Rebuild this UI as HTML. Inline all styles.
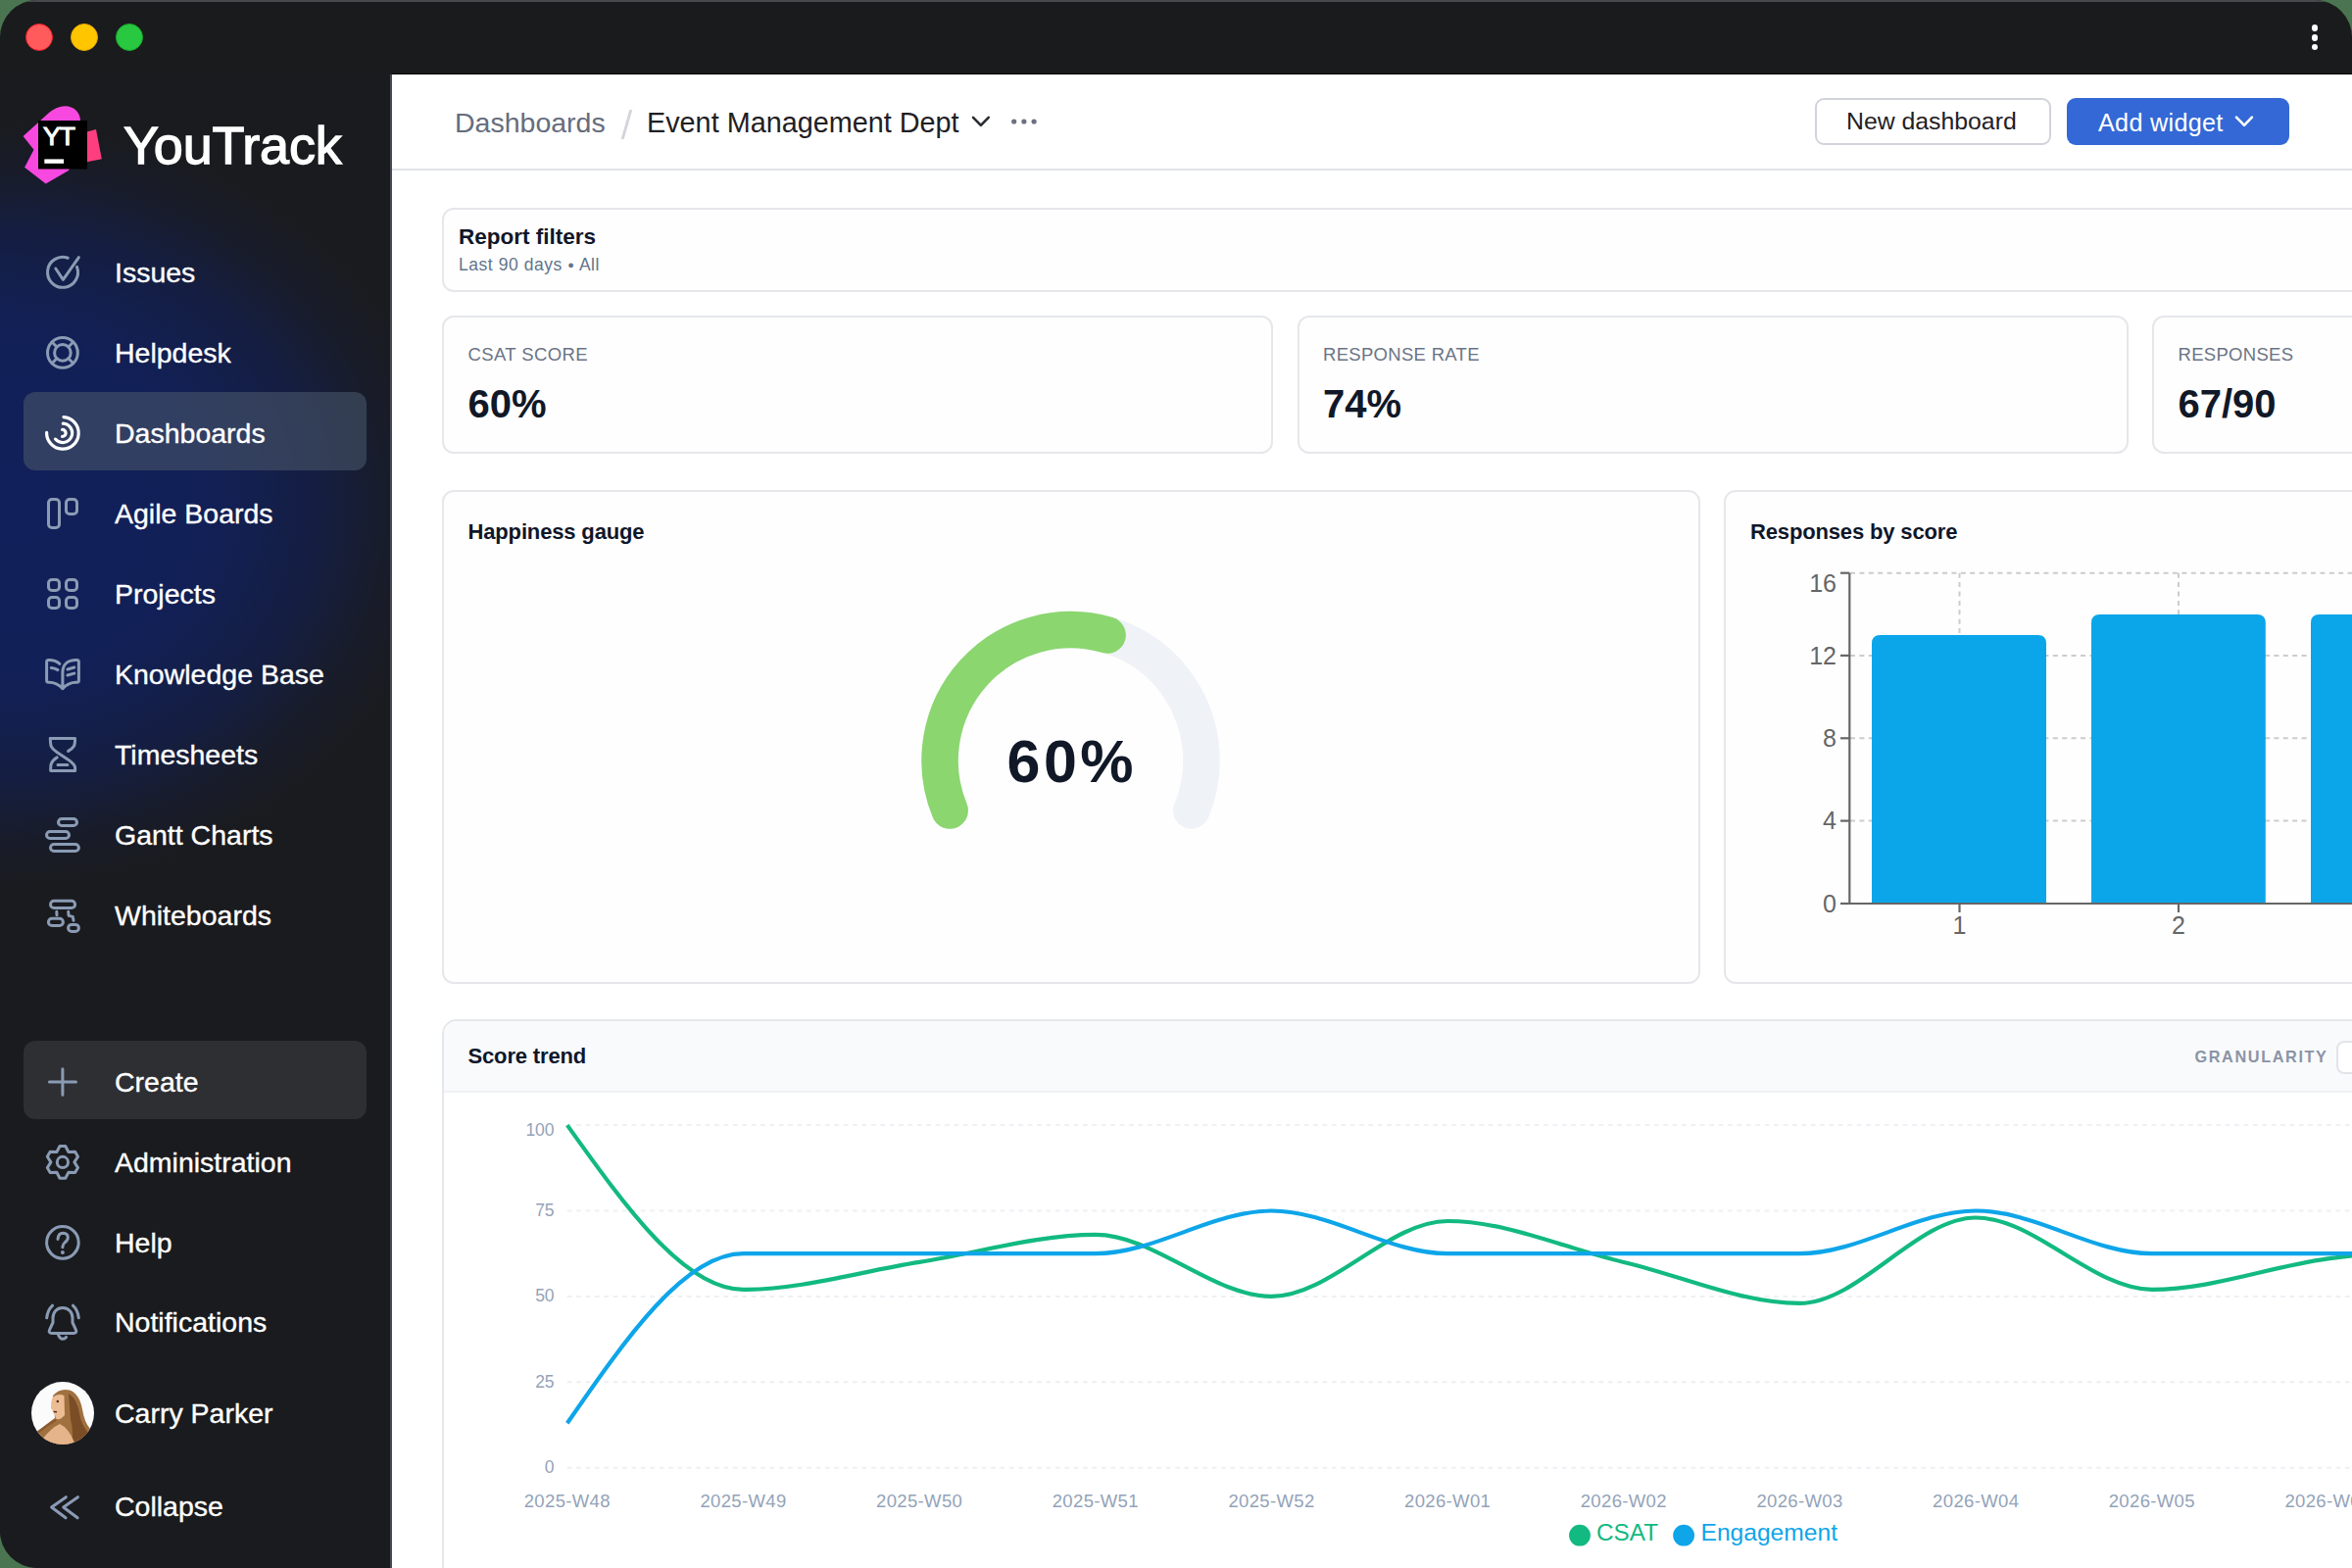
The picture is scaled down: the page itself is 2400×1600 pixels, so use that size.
<!DOCTYPE html>
<html><head><meta charset="utf-8">
<style>
*{box-sizing:border-box;margin:0;padding:0}
html,body{width:2400px;height:1600px;overflow:hidden;background:#4b7550;font-family:"Liberation Sans",sans-serif}
.win{position:absolute;left:0;top:0;width:2400px;height:1600px;background:#1a1b1d;border-radius:38px 38px 0 38px;overflow:hidden}
.topline{position:absolute;left:0;top:0;width:2400px;height:2px;background:#48494c}
.abs{position:absolute}
.tl{position:absolute;width:28px;height:28px;border-radius:50%;top:24px}
.side{position:absolute;left:0;top:76px;width:398px;height:1524px;background:#1a1b1e;overflow:hidden}
.sidegrad{position:absolute;left:0;top:0;width:398px;height:1524px;
 background:radial-gradient(ellipse 460px 395px at 0px 440px, rgba(17,32,90,1) 0%, rgba(17,32,90,0.95) 45%, rgba(17,32,90,0.6) 70%, rgba(17,32,90,0.2) 86%, rgba(17,32,90,0) 100%)}
.sideborder{position:absolute;left:398px;top:76px;width:2px;height:1524px;background:#474a54}
.titleline{position:absolute;left:400px;top:75px;width:2000px;height:1px;background:#050608}
.main{position:absolute;left:400px;top:76px;width:2000px;height:1524px;background:#fff;overflow:hidden}
.navtxt{position:absolute;left:118px;color:#fff;font-size:28px;white-space:nowrap;line-height:1}
.card{position:absolute;border:2px solid #e5e7eb;border-radius:12px;background:#fefefe}
.t{position:absolute;white-space:nowrap;line-height:1}
.sb{-webkit-text-stroke:0.35px #fff}
</style></head>
<body>
<div class="win">
  <div class="topline"></div>
  <div class="tl" style="left:26px;background:#ff5a5c;border:1px solid #f0202a"></div>
  <div class="tl" style="left:72px;background:#ffc600;border:1px solid #e6a800"></div>
  <div class="tl" style="left:118px;background:#28c840;border:1px solid #1aab29"></div>
  <!-- kebab -->
  <div class="abs" style="left:2358.5px;top:25px;width:6.5px;height:6.5px;border-radius:50%;background:#fff"></div>
  <div class="abs" style="left:2358.5px;top:35px;width:6.5px;height:6.5px;border-radius:50%;background:#fff"></div>
  <div class="abs" style="left:2358.5px;top:44.7px;width:6.5px;height:6.5px;border-radius:50%;background:#fff"></div>
  <div class="titleline"></div>

  <div class="side">
    <div class="sidegrad"></div>
  </div>

  <div class="abs" style="left:24px;top:400px;width:350px;height:80px;border-radius:12px;background:rgba(71,85,105,0.6)"></div>
  <div class="abs" style="left:24px;top:1062px;width:350px;height:80px;border-radius:12px;background:#2e2f33"></div>
  <svg class="abs" style="left:0;top:0" width="400" height="1600" viewBox="0 0 400 1600">
    <!-- logo -->
    <path d="M23.6,139 L48.9,115.9 C58,108 70,105 78,113 C81,116 82,120 82,124 L82,150 L70,174 L46.7,187.5 L25.1,170.8 L34.5,152.8 Z" fill="#f748e0"/>
    <path d="M85,135.5 L98,132.1 L103.8,162.2 L85,166 Z" fill="#ff3e7f"/>
    <rect x="39" y="123" width="50" height="49.5" fill="#000"/>
    <rect x="45.3" y="162.4" width="19.8" height="4.4" fill="#fff"/>
    <g fill="none" stroke="#8a9bb4" stroke-width="3" stroke-linecap="round" stroke-linejoin="round">
      <!-- issues -->
      <path d="M78.54,272.42 A15.5,15.5 0 1 1 69.25,263.22"/>
      <path d="M56.8,274 L64.4,285.3 L80.4,262.7"/>
      <!-- helpdesk -->
      <circle cx="63.9" cy="359.9" r="15.4"/>
      <circle cx="63.9" cy="359.9" r="8.3"/>
      <path d="M58.0,354.0 L53.0,349.0 M69.8,354.0 L74.8,349.0 M58.0,365.8 L53.0,370.8 M69.8,365.8 L74.8,370.8"/>
      <!-- agile -->
      <rect x="49.5" y="509.5" width="11" height="28.9" rx="3.5"/>
      <rect x="67.5" y="509.5" width="11" height="15" rx="3.5"/>
      <!-- projects -->
      <rect x="49.5" y="591.5" width="11" height="11" rx="3.5"/>
      <rect x="67.5" y="591.5" width="11" height="11" rx="3.5"/>
      <rect x="49.5" y="609.5" width="11" height="11" rx="3.5"/>
      <rect x="67.5" y="609.5" width="11" height="11" rx="3.5"/>
      <!-- knowledge base -->
      <path d="M60.9,677.3 C58,674.8 54,673.5 50,673.5 L49.5,673.5 Q47.6,673.5 47.6,675.5 L47.6,694.3 Q47.6,696.3 49.6,696.3 L50,696.3 C55,696.3 60,698.5 63.9,702.6 C67.8,698.5 72.8,696.3 77.8,696.3 L78.4,696.3 Q80.4,696.3 80.4,694.3 L80.4,675.5 Q80.4,673.5 78.4,673.5 L77.8,673.5 C69,673.5 63.9,678 63.9,686 L63.9,701"/>
      <path d="M52.3,681.4 C55,681.6 57,682.4 59,683.6 M68.9,683 L75.8,681 M68.9,689 L75.8,687.1"/>
      <!-- timesheets -->
      <path d="M51.3,753.4 L76.6,753.4 Q76.6,758 75.8,760.7 Q74,764 69.7,766.4"/>
      <path d="M51.3,753.4 Q51.3,758 52.1,761.4 Q53.5,764.5 58,767.5 L70,775.5 Q75.8,779.5 76.6,783 L76.6,786.5 L51.7,786.5 Q51.5,782 52.2,779.5 Q53.8,775.5 58.2,772.9"/>
      <path d="M59,780.6 L68.9,780.6"/>
      <!-- gantt -->
      <rect x="59.5" y="835.4" width="19" height="7.1" rx="3.55"/>
      <rect x="47.5" y="848.4" width="23" height="7.1" rx="3.55"/>
      <rect x="51.5" y="861.4" width="28.9" height="7.1" rx="3.55"/>
      <!-- whiteboards -->
      <rect x="51.5" y="919.3" width="25.1" height="7.3" rx="3.6"/>
      <rect x="49.4" y="937.3" width="15" height="7.3" rx="3.6"/>
      <rect x="69.6" y="943.4" width="10.8" height="7.1" rx="3.5"/>
      <path d="M57.8,930.3 L58,933.8 M69.7,930.3 L70.1,934.4 L74.3,935.4 L75,939.3"/>
      <!-- create -->
      <path d="M63.9,1090.8 L63.9,1117.3 M50.4,1104 L77.5,1104"/>
      <!-- admin gear -->
      <path d="M61.02,1169.55 L66.78,1169.55 L69.90,1175.51 L76.62,1175.23 L79.50,1180.22 L75.90,1185.90 L79.50,1191.58 L76.62,1196.57 L69.90,1196.29 L66.78,1202.25 L61.02,1202.25 L57.90,1196.29 L51.18,1196.57 L48.30,1191.58 L51.90,1185.90 L48.30,1180.22 L51.18,1175.23 L57.90,1175.51 L61.02,1169.55 Z"/>
      <circle cx="63.9" cy="1185.9" r="5.6"/>
      <!-- help -->
      <circle cx="63.9" cy="1267.9" r="16.3"/>
      <path d="M59,1264.4 Q59.5,1258.3 64.3,1258.3 Q69.3,1258.5 69.3,1262.8 Q69.3,1265.5 66,1268 Q63.9,1270 63.9,1272.8"/>
      <!-- bell -->
      <path d="M63.9,1334.5 C58,1334.5 54,1339 54,1345 L54,1349.5 L50.6,1356.8 Q49.2,1360.4 53,1360.4 L75,1360.4 Q78.7,1360.4 77.4,1356.8 L74,1349.5 L74,1345 C74,1339 69.8,1334.5 63.9,1334.5 Z"/>
      <path d="M59.3,1361.5 Q61,1366.3 63.9,1366.3 Q66.3,1366.3 67.6,1364.4"/>
      <path d="M53.6,1332.2 Q48.5,1337 47.7,1344.8 M74.4,1332.2 Q79.5,1337 80.3,1344.8"/>
      <!-- collapse -->
      <path d="M67.3,1527.7 L52.6,1538 L67,1548.8 M79.4,1527.7 L64.7,1538 L79.1,1548.8"/>
    </g>
    <circle cx="63.9" cy="1277.9" r="2" fill="#8a9bb4"/>
    <!-- dashboards icon (white) -->
    <g fill="none" stroke="#fff" stroke-width="3.2" stroke-linecap="round">
      <path d="M65,425.6 A16.3,16.3 0 1 1 47.6,441.3"/>
      <path d="M64.3,432.2 A9.7,9.7 0 1 1 56.5,448.1"/>
      <path d="M63.6,438.4 A3.5,3.5 0 0 1 63.6,445.4"/>
    </g>
    <!-- avatar -->
    <defs><clipPath id="av"><circle cx="64" cy="1442" r="32"/></clipPath></defs>
    <g clip-path="url(#av)">
      <rect x="30" y="1408" width="70" height="70" fill="#fbfbfc"/>
      <path d="M54,1424 Q61,1416 71,1418.5 Q81,1422 84,1438 Q86,1451 92,1458 L97,1480 L38,1480 L37,1463 Q47,1453 56,1447 Z" fill="#a0703f"/>
      <path d="M70,1422 Q79,1428 81,1442 Q83,1454 90,1462 L92,1480 L72,1480 Q76,1462 72,1448 Z" fill="#7a4d26"/>
      <path d="M53.5,1426 Q59,1421 65.5,1424 L66,1444 Q61,1450 57,1447.5 L55.5,1442 L52,1437 Q51.5,1431 53.5,1426 Z" fill="#ecbd93"/>
      <path d="M42,1470 Q52,1457 61,1453 Q70,1457 76,1472 L74,1480 L44,1480 Z" fill="#e6b48a"/>
      <path d="M38,1462 Q48,1454 57,1449" stroke="#8a5a30" stroke-width="2.5" fill="none"/>
      <circle cx="58.8" cy="1430" r="1.2" fill="#4a2a14"/>
      <path d="M54.5,1440.5 L58,1440.8" stroke="#5a2a18" stroke-width="1.4"/>
    </g>
  </svg>
  <div class="t" style="left:44px;top:125.6px;font-size:26.5px;font-weight:400;color:#fff;letter-spacing:-1px;-webkit-text-stroke:1.1px #fff">YT</div>
  <div class="t" style="left:126px;top:121px;font-size:54px;font-weight:400;color:#fff;letter-spacing:-0.2px;-webkit-text-stroke:1.3px #fff">YouTrack</div>
<div class="t sb" style="left:117px;top:263.8px;font-size:28.5px;color:#fff;">Issues</div>
<div class="t sb" style="left:117px;top:345.8px;font-size:28.5px;color:#fff;">Helpdesk</div>
<div class="t sb" style="left:117px;top:427.8px;font-size:28.5px;color:#fff;">Dashboards</div>
<div class="t sb" style="left:117px;top:509.8px;font-size:28.5px;color:#fff;">Agile Boards</div>
<div class="t sb" style="left:117px;top:591.8px;font-size:28.5px;color:#fff;">Projects</div>
<div class="t sb" style="left:117px;top:673.8px;font-size:28.5px;color:#fff;">Knowledge Base</div>
<div class="t sb" style="left:117px;top:755.8px;font-size:28.5px;color:#fff;">Timesheets</div>
<div class="t sb" style="left:117px;top:837.8px;font-size:28.5px;color:#fff;">Gantt Charts</div>
<div class="t sb" style="left:117px;top:919.8px;font-size:28.5px;color:#fff;">Whiteboards</div>
<div class="t sb" style="left:117px;top:1089.5px;font-size:28.5px;color:#fff;">Create</div>
<div class="t sb" style="left:117px;top:1171.5px;font-size:28.5px;color:#fff;">Administration</div>
<div class="t sb" style="left:117px;top:1253.6px;font-size:28.5px;color:#fff;">Help</div>
<div class="t sb" style="left:117px;top:1335.4px;font-size:28.5px;color:#fff;">Notifications</div>
<div class="t sb" style="left:117px;top:1428.1px;font-size:28.5px;color:#fff;">Carry Parker</div>
<div class="t sb" style="left:117px;top:1523.4px;font-size:28.5px;color:#fff;">Collapse</div>
  <div class="sideborder"></div>

  <div class="main"></div>
<div class="abs" style="left:400px;top:172px;width:2000px;height:2px;background:#e1e3e8"></div>
<div class="t" style="left:464px;top:111.0px;font-size:28.5px;color:#666d7d;font-weight:400;">Dashboards</div>
<div class="abs" style="left:638px;top:112px;width:2.6px;height:30px;background:#d3d5db;transform:skewX(-16deg)"></div>
<div class="t" style="left:660px;top:111.3px;font-size:28.8px;color:#1f2024;font-weight:400;">Event Management Dept</div>
<div class="abs" style="left:1852px;top:100px;width:241px;height:48px;border:2px solid #d1d4da;border-radius:9px;background:#fff"></div>
<div class="t" style="left:1884px;top:111.8px;font-size:24.8px;color:#1f2024;font-weight:400;">New dashboard</div>
<div class="abs" style="left:2109px;top:100px;width:227px;height:48px;border-radius:9px;background:#3368d6"></div>
<div class="t" style="left:2141px;top:112.6px;font-size:25.2px;color:#ffffff;font-weight:400;letter-spacing:0.3px">Add widget</div>
<div class="card" style="left:451px;top:212px;width:2100px;height:86px"></div>
<div class="t" style="left:468px;top:231.1px;font-size:22.5px;color:#0f172a;font-weight:700;">Report filters</div>
<div class="t" style="left:468px;top:261.6px;font-size:17.5px;color:#64748b;font-weight:400;letter-spacing:0.55px">Last 90 days <span style="font-size:11px;vertical-align:2px">●</span> All</div>
<div class="card" style="left:451.0px;top:322px;width:848px;height:141px"></div>
<div class="t" style="left:477.5px;top:353.2px;font-size:18.5px;color:#6b7485;font-weight:400;letter-spacing:0.4px">CSAT SCORE</div>
<div class="t" style="left:477.5px;top:391.7px;font-size:40px;color:#111827;font-weight:700;">60%</div>
<div class="card" style="left:1323.5px;top:322px;width:848px;height:141px"></div>
<div class="t" style="left:1350.0px;top:353.2px;font-size:18.5px;color:#6b7485;font-weight:400;letter-spacing:0.3px">RESPONSE RATE</div>
<div class="t" style="left:1350.0px;top:391.7px;font-size:40px;color:#111827;font-weight:700;">74%</div>
<div class="card" style="left:2196.0px;top:322px;width:848px;height:141px"></div>
<div class="t" style="left:2222.5px;top:353.2px;font-size:18.5px;color:#6b7485;font-weight:400;letter-spacing:0.3px">RESPONSES</div>
<div class="t" style="left:2222.5px;top:391.7px;font-size:40px;color:#111827;font-weight:700;">67/90</div>
<div class="card" style="left:451px;top:500px;width:1284px;height:504px"></div>
<div class="t" style="left:477.5px;top:531.9px;font-size:22px;color:#0f172a;font-weight:700;letter-spacing:-0.15px">Happiness gauge</div>
<div class="card" style="left:1759px;top:500px;width:800px;height:504px"></div>
<div class="t" style="left:1786px;top:531.9px;font-size:22px;color:#0f172a;font-weight:700;letter-spacing:-0.15px">Responses by score</div>
<div class="card" style="left:451px;top:1040px;width:2100px;height:700px;border-radius:15px;background:#fff;overflow:hidden"><div style="position:absolute;left:0;top:0;width:100%;height:73px;background:#f9fafb;border-bottom:2px solid #eff1f4"></div><div style="position:absolute;left:1931px;top:19.5px;width:120px;height:34px;border:2px solid #e2e4e9;border-radius:8px;background:#fff"></div></div>
<div class="t" style="left:477.5px;top:1067.4px;font-size:22px;color:#0f172a;font-weight:700;letter-spacing:-0.15px">Score trend</div>
<div class="t" style="left:2239.5px;top:1070.3px;font-size:16.3px;color:#8b94a6;font-weight:700;letter-spacing:1.6px">GRANULARITY</div>
<svg class="abs" style="left:0;top:0" width="2400" height="200" viewBox="0 0 2400 200"><path d="M993,119.8 L1000.9,127.8 L1008.7,119.8" fill="none" stroke="#2a2c33" stroke-width="2.6" stroke-linecap="round" stroke-linejoin="round"/><circle cx="1034.7" cy="124" r="2.6" fill="#6b7180"/><circle cx="1044.9" cy="124" r="2.6" fill="#6b7180"/><circle cx="1055.1" cy="124" r="2.6" fill="#6b7180"/><path d="M2282,119.6 L2290,127.8 L2297.9,119.6" fill="none" stroke="#fff" stroke-width="2.6" stroke-linecap="round" stroke-linejoin="round"/></svg>
<svg class="abs" style="left:0;top:0" width="2400" height="1600" viewBox="0 0 2400 1600">
<path d="M969.2,827.1 A133.5,133.5 0 1 1 1215.8,827.1" fill="none" stroke="#eff2f7" stroke-width="37.5" stroke-linecap="round"/>
<path d="M969.2,827.1 A133.5,133.5 0 0 1 1130.1,648.0" fill="none" stroke="#8bd66f" stroke-width="37.5" stroke-linecap="round"/>
<line x1="1888" y1="584.7" x2="2400" y2="584.7" stroke="#cccccc" stroke-width="2" stroke-dasharray="5 4.4"/>
<line x1="1888" y1="668.9" x2="2400" y2="668.9" stroke="#cccccc" stroke-width="2" stroke-dasharray="5 4.4"/>
<line x1="1888" y1="753.3" x2="2400" y2="753.3" stroke="#cccccc" stroke-width="2" stroke-dasharray="5 4.4"/>
<line x1="1888" y1="837.6" x2="2400" y2="837.6" stroke="#cccccc" stroke-width="2" stroke-dasharray="5 4.4"/>
<line x1="1999.5" y1="584.7" x2="1999.5" y2="922" stroke="#cccccc" stroke-width="2" stroke-dasharray="5 4.4"/>
<line x1="2223" y1="584.7" x2="2223" y2="922" stroke="#cccccc" stroke-width="2" stroke-dasharray="5 4.4"/>
<line x1="2446.5" y1="584.7" x2="2446.5" y2="922" stroke="#cccccc" stroke-width="2" stroke-dasharray="5 4.4"/>
<path d="M1910,922 L1910,656.4 Q1910,647.9 1918.5,647.9 L2079.5,647.9 Q2088,647.9 2088,656.4 L2088,922 Z" fill="#0ba5e9"/>
<path d="M2134,922 L2134,635.4 Q2134,626.9 2142.5,626.9 L2303.3,626.9 Q2311.8,626.9 2311.8,635.4 L2311.8,922 Z" fill="#0ba5e9"/>
<path d="M2358,922 L2358,635.4 Q2358,626.9 2366.5,626.9 L2527.3,626.9 Q2535.8,626.9 2535.8,635.4 L2535.8,922 Z" fill="#0ba5e9"/>
<path d="M1887.3,584.7 L1887.3,922" stroke="#666" stroke-width="2.2" fill="none"/>
<path d="M1878,922 L2400,922" stroke="#666" stroke-width="2.2" fill="none"/>
<path d="M1878,584.7 L1887.3,584.7" stroke="#666" stroke-width="2.2"/>
<path d="M1878,668.9 L1887.3,668.9" stroke="#666" stroke-width="2.2"/>
<path d="M1878,753.3 L1887.3,753.3" stroke="#666" stroke-width="2.2"/>
<path d="M1878,837.6 L1887.3,837.6" stroke="#666" stroke-width="2.2"/>
<path d="M1878,922 L1887.3,922" stroke="#666" stroke-width="2.2"/>
<path d="M1999.5,922 L1999.5,931" stroke="#666" stroke-width="2.2"/>
<path d="M2223,922 L2223,931" stroke="#666" stroke-width="2.2"/>
<path d="M2446.5,922 L2446.5,931" stroke="#666" stroke-width="2.2"/>
<line x1="578.7" y1="1148.1" x2="2400" y2="1148.1" stroke="#edf0f4" stroke-width="2" stroke-dasharray="4.7 4.7"/>
<line x1="578.7" y1="1235.5" x2="2400" y2="1235.5" stroke="#edf0f4" stroke-width="2" stroke-dasharray="4.7 4.7"/>
<line x1="578.7" y1="1322.9" x2="2400" y2="1322.9" stroke="#edf0f4" stroke-width="2" stroke-dasharray="4.7 4.7"/>
<line x1="578.7" y1="1410.3" x2="2400" y2="1410.3" stroke="#edf0f4" stroke-width="2" stroke-dasharray="4.7 4.7"/>
<line x1="578.7" y1="1497.7" x2="2400" y2="1497.7" stroke="#edf0f4" stroke-width="2" stroke-dasharray="4.7 4.7"/>
<path d="M578.80,1148.10 C638.69,1232.00 698.58,1315.91 758.47,1315.91 C818.36,1315.91 878.25,1297.26 938.14,1287.94 C998.03,1278.62 1057.92,1259.97 1117.81,1259.97 C1177.70,1259.97 1237.59,1322.90 1297.48,1322.90 C1357.37,1322.90 1417.26,1245.99 1477.15,1245.99 C1537.04,1245.99 1596.93,1273.96 1656.82,1287.94 C1716.71,1301.92 1776.60,1329.89 1836.49,1329.89 C1896.38,1329.89 1956.27,1242.49 2016.16,1242.49 C2076.05,1242.49 2135.94,1315.91 2195.83,1315.91 C2255.72,1315.91 2315.61,1292.60 2375.50,1284.44 C2435.39,1276.29 2495.28,1271.63 2555.17,1266.96" fill="none" stroke="#12b981" stroke-width="4.2"/>
<path d="M578.80,1452.25 C638.69,1365.73 698.58,1279.20 758.47,1279.20 C818.36,1279.20 878.25,1279.20 938.14,1279.20 C998.03,1279.20 1057.92,1279.20 1117.81,1279.20 C1177.70,1279.20 1237.59,1235.50 1297.48,1235.50 C1357.37,1235.50 1417.26,1279.20 1477.15,1279.20 C1537.04,1279.20 1596.93,1279.20 1656.82,1279.20 C1716.71,1279.20 1776.60,1279.20 1836.49,1279.20 C1896.38,1279.20 1956.27,1235.50 2016.16,1235.50 C2076.05,1235.50 2135.94,1279.20 2195.83,1279.20 C2255.72,1279.20 2315.61,1279.20 2375.50,1279.20 C2435.39,1279.20 2495.28,1279.20 2555.17,1279.20" fill="none" stroke="#0ea5e9" stroke-width="4.2"/>
<circle cx="1612" cy="1566.7" r="10.9" fill="#12b981"/><circle cx="1718.1" cy="1566.7" r="10.9" fill="#0ea5e9"/>
</svg>
<div class="t" style="left:892.0px;width:400px;text-align:center;top:747.2px;font-size:61px;color:#111827;font-weight:700;letter-spacing:3.5px;text-indent:3.5px">60%</div>
<div class="t" style="left:1574.0px;width:300px;text-align:right;top:583.0px;font-size:25px;color:#666666;font-weight:400;">16</div>
<div class="t" style="left:1574.0px;width:300px;text-align:right;top:656.5px;font-size:25px;color:#666666;font-weight:400;">12</div>
<div class="t" style="left:1574.0px;width:300px;text-align:right;top:741.0px;font-size:25px;color:#666666;font-weight:400;">8</div>
<div class="t" style="left:1574.0px;width:300px;text-align:right;top:825.4px;font-size:25px;color:#666666;font-weight:400;">4</div>
<div class="t" style="left:1574.0px;width:300px;text-align:right;top:909.8px;font-size:25px;color:#666666;font-weight:400;">0</div>
<div class="t" style="left:1799.5px;width:400px;text-align:center;top:931.5px;font-size:25px;color:#666666;font-weight:400;">1</div>
<div class="t" style="left:2023.0px;width:400px;text-align:center;top:931.5px;font-size:25px;color:#666666;font-weight:400;">2</div>
<div class="t" style="left:265.6px;width:300px;text-align:right;top:1144.6px;font-size:17.5px;color:#94a3b8;font-weight:400;">100</div>
<div class="t" style="left:265.6px;width:300px;text-align:right;top:1227.0px;font-size:17.5px;color:#94a3b8;font-weight:400;">75</div>
<div class="t" style="left:265.6px;width:300px;text-align:right;top:1314.4px;font-size:17.5px;color:#94a3b8;font-weight:400;">50</div>
<div class="t" style="left:265.6px;width:300px;text-align:right;top:1401.8px;font-size:17.5px;color:#94a3b8;font-weight:400;">25</div>
<div class="t" style="left:265.6px;width:300px;text-align:right;top:1489.2px;font-size:17.5px;color:#94a3b8;font-weight:400;">0</div>
<div class="t" style="left:378.8px;width:400px;text-align:center;top:1523.4px;font-size:18.5px;color:#94a3b8;font-weight:400;letter-spacing:0.35px">2025-W48</div>
<div class="t" style="left:558.5px;width:400px;text-align:center;top:1523.4px;font-size:18.5px;color:#94a3b8;font-weight:400;letter-spacing:0.35px">2025-W49</div>
<div class="t" style="left:738.1px;width:400px;text-align:center;top:1523.4px;font-size:18.5px;color:#94a3b8;font-weight:400;letter-spacing:0.35px">2025-W50</div>
<div class="t" style="left:917.8px;width:400px;text-align:center;top:1523.4px;font-size:18.5px;color:#94a3b8;font-weight:400;letter-spacing:0.35px">2025-W51</div>
<div class="t" style="left:1097.5px;width:400px;text-align:center;top:1523.4px;font-size:18.5px;color:#94a3b8;font-weight:400;letter-spacing:0.35px">2025-W52</div>
<div class="t" style="left:1277.1px;width:400px;text-align:center;top:1523.4px;font-size:18.5px;color:#94a3b8;font-weight:400;letter-spacing:0.35px">2026-W01</div>
<div class="t" style="left:1456.8px;width:400px;text-align:center;top:1523.4px;font-size:18.5px;color:#94a3b8;font-weight:400;letter-spacing:0.35px">2026-W02</div>
<div class="t" style="left:1636.5px;width:400px;text-align:center;top:1523.4px;font-size:18.5px;color:#94a3b8;font-weight:400;letter-spacing:0.35px">2026-W03</div>
<div class="t" style="left:1816.2px;width:400px;text-align:center;top:1523.4px;font-size:18.5px;color:#94a3b8;font-weight:400;letter-spacing:0.35px">2026-W04</div>
<div class="t" style="left:1995.8px;width:400px;text-align:center;top:1523.4px;font-size:18.5px;color:#94a3b8;font-weight:400;letter-spacing:0.35px">2026-W05</div>
<div class="t" style="left:2175.5px;width:400px;text-align:center;top:1523.4px;font-size:18.5px;color:#94a3b8;font-weight:400;letter-spacing:0.35px">2026-W06</div>
<div class="t" style="left:1629px;top:1552.2px;font-size:24.3px;color:#12b981;font-weight:400;">CSAT</div>
<div class="t" style="left:1735.5px;top:1552.0px;font-size:24.6px;color:#0ea5e9;font-weight:400;">Engagement</div>
</div>
</body></html>
